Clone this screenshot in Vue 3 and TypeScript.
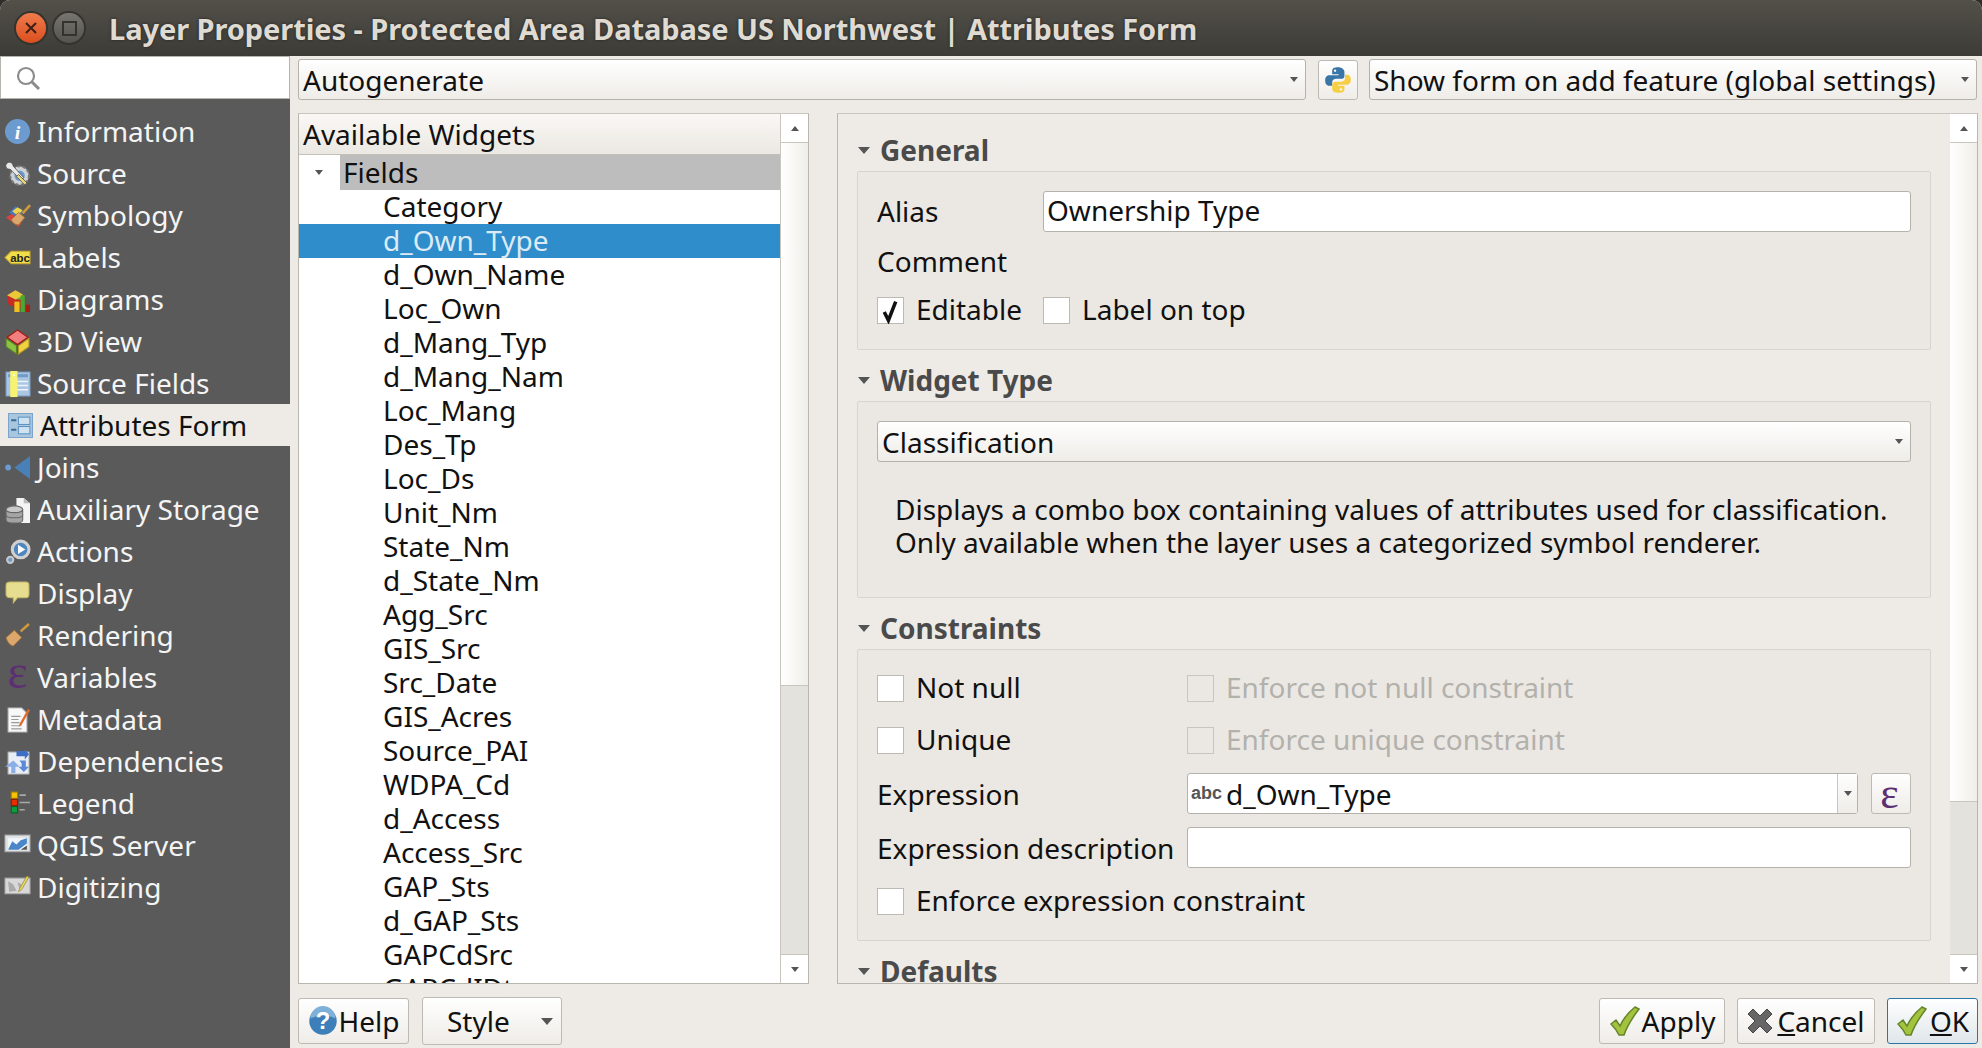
<template>
  <div class="window">
    <header class="titlebar">
      <span class="wm-btn close"><svg viewBox="0 0 16 16" width="16" height="16"><path d="M3 3l10 10M13 3L3 13" stroke="#3a2018" stroke-width="2" /></svg></span>
      <span class="wm-btn maxi"><i></i></span>
      <h1>Layer Properties - Protected Area Database US Northwest | Attributes Form</h1>
    </header>

    <div class="body">
      <aside class="sidebar">
        <div class="search">
          <svg viewBox="0 0 26 26" width="26" height="26"><circle cx="11" cy="11" r="8" fill="none" stroke="#8c8c8c" stroke-width="2.2" /><path d="M17 17l7 7" stroke="#8c8c8c" stroke-width="3" /></svg>
        </div>
        <nav class="nav">
          <div v-for="item in navItems" :key="item.label" class="nav-item" :class="{ active: item.label === 'Attributes Form' }">
            <svg class="nav-icon" viewBox="0 0 24 24" width="25" height="25" v-html="item.icon"></svg>
            <span>{{ item.label }}</span>
          </div>
        </nav>
      </aside>

      <main class="main">
        <div class="toprow">
          <div class="combo"><span>Autogenerate</span><b class="caret small"></b></div>
          <button class="pybtn">
            <svg viewBox="0 0 24 24" width="28" height="28">
              <path d="M12 1C7 1 7 3 7 5v2h5.500v1H4.500C2 8 1 10 1 12.500S2 17 4.500 17H7v-3c0-2 1.500-3 3.500-3h4.500c1.500 0 2.500-1 2.500-2.500V5c0-2-2-4-5.500-4z" fill="#3a75a8" />
              <path d="M12.500 23c5 0 5-2 5-4v-2H12v-1h7.500c2.500 0 3.500-2 3.500-4.500S22 7.500 19.500 7.500H18v3c0 2-1.500 3-3.500 3H10c-1.500 0-3 1-3 2.500v3.500c0 2 2 3.500 5.500 3.500z" fill="#f7cf45" />
              <circle cx="9.500" cy="4" r="1" fill="#fff" /><circle cx="14.500" cy="20" r="1" fill="#fff" />
            </svg>
          </button>
          <div class="combo"><span>Show form on add feature (global settings)</span><b class="caret small"></b></div>
        </div>

        <div class="panes">
          <section class="tree">
            <div class="tree-main">
              <div class="tree-head">Available Widgets</div>
              <div class="tree-root">
                <span class="tree-toggle"><b class="caret small"></b></span>
                <span class="tree-fields">Fields</span>
              </div>
              <div v-for="name in fields" :key="name" class="tree-row" :class="{ selected: name === 'd_Own_Type' }">
                <span>{{ name }}</span>
              </div>
            </div>
            <div class="scrollbar">
              <div class="sb-btn up"><b class="caret up small"></b></div>
              <div class="sb-thumb tree-thumb"></div>
              <div class="sb-track"></div>
              <div class="sb-btn"><b class="caret small"></b></div>
            </div>
          </section>

          <section class="form-pane">
            <div class="form-main">
              <div class="group">
                <div class="group-title"><b class="caret"></b>General</div>
                <div class="group-box general">
                  <div class="alias-row">
                    <label>Alias</label>
                    <div class="input">Ownership Type</div>
                  </div>
                  <div class="comment-row">Comment</div>
                  <div class="checks-row">
                    <div class="check-col">
                      <span class="checkbox">
                        <svg viewBox="0 0 24 24" width="26" height="26"><path d="M6 13l4 8 7-18" fill="none" stroke="#111" stroke-width="3.400" /></svg>
                      </span>
                      Editable
                    </div>
                    <div class="check-col"><span class="checkbox"></span>Label on top</div>
                  </div>
                </div>
              </div>

              <div class="group">
                <div class="group-title"><b class="caret"></b>Widget Type</div>
                <div class="group-box widget">
                  <div class="combo"><span>Classification</span><b class="caret small"></b></div>
                  <p class="desc">Displays a combo box containing values of attributes used for classification.<br />Only available when the layer uses a categorized symbol renderer.</p>
                </div>
              </div>

              <div class="group">
                <div class="group-title"><b class="caret"></b>Constraints</div>
                <div class="group-box constraints">
                  <div class="cons-row first">
                    <div class="check-col"><span class="checkbox"></span>Not null</div>
                    <div class="check-col disabled"><span class="checkbox"></span>Enforce not null constraint</div>
                  </div>
                  <div class="cons-row second">
                    <div class="check-col"><span class="checkbox"></span>Unique</div>
                    <div class="check-col disabled"><span class="checkbox"></span>Enforce unique constraint</div>
                  </div>
                  <div class="cons-row expr">
                    <label>Expression</label>
                    <div class="expr-wrap">
                      <div class="expr-input">
                        <span class="abc">abc</span><span class="expr-text">d_Own_Type</span>
                        <span class="expr-drop"><b class="caret small"></b></span>
                      </div>
                      <button class="eps-btn">ε</button>
                    </div>
                  </div>
                  <div class="cons-row exprdesc">
                    <label>Expression description</label>
                    <div class="input"></div>
                  </div>
                  <div class="cons-row enforce">
                    <div class="check-col"><span class="checkbox"></span>Enforce expression constraint</div>
                  </div>
                </div>
              </div>

              <div class="group">
                <div class="group-title"><b class="caret"></b>Defaults</div>
              </div>
            </div>
            <div class="scrollbar">
              <div class="sb-btn up"><b class="caret up small"></b></div>
              <div class="sb-thumb form-thumb"></div>
              <div class="sb-track"></div>
              <div class="sb-btn"><b class="caret small"></b></div>
            </div>
          </section>
        </div>

        <footer class="buttons">
          <button class="btn help">
            <svg viewBox="0 0 24 24" width="30" height="30">
              <circle cx="12" cy="12" r="11" fill="#3d7fb8" />
              <path d="M2 10a10 10 0 0 1 20 0c-5-3-14-3-20 0z" fill="#7fb0d8" />
              <text x="12" y="18" text-anchor="middle" class="help-mark">?</text>
            </svg>
            Help
          </button>
          <button class="btn style"><span>Style</span><b class="caret"></b></button>
          <span class="spacer"></span>
          <button class="btn apply">
            <svg viewBox="0 0 32 32" width="32" height="32"><path :d="tickPath" fill="#a3c23e" stroke="#64852a" stroke-width="1.500" /></svg>
            Apply
          </button>
          <button class="btn cancel">
            <svg viewBox="0 0 26 26" width="26" height="26"><path d="M6 1l7 7 7-7 5 5-7 7 7 7-5 5-7-7-7 7-5-5 7-7-7-7z" fill="#666" stroke="#444" stroke-width="1" /></svg>
            <span><u>C</u>ancel</span>
          </button>
          <button class="btn ok">
            <svg viewBox="0 0 32 32" width="32" height="32"><path :d="tickPath" fill="#a3c23e" stroke="#64852a" stroke-width="1.500" /></svg>
            <span><u>O</u>K</span>
          </button>
        </footer>
      </main>
    </div>
  </div>
</template>

<script setup lang="ts">
const tickPath = 'M2 19l5-4 4 6C15 12 21 6 26 2l4 2c-6 8-12 17-15 26h-5C8 26 5 22 2 19z'

const navItems: { label: string; icon: string }[] = [
  { label: 'Information', icon: '<circle cx="12" cy="12" r="12" fill="#6c9bd0"/><text x="12" y="19" text-anchor="middle" font-family="Liberation Serif" font-weight="700" font-style="italic" font-size="19" fill="#fff">i</text>' },
  { label: 'Source', icon: '<circle cx="14" cy="14" r="9" fill="#cfd3d6" stroke="#777" stroke-dasharray="3 2" stroke-width="2"/><circle cx="14" cy="14" r="5" fill="#6c9bd0"/><path d="M1 3c3-3 6-2 7 2l10 11-3 2L5 8C2 8 0 6 1 3z" fill="#e8e8e8" stroke="#444" stroke-width=".7"/><path d="M13 13l8 8-2 2-8-8z" fill="#e8d77a" stroke="#444" stroke-width=".7"/>' },
  { label: 'Symbology', icon: '<path d="M1 14l6-4 9 9-3 4z" fill="#d8453f"/><path d="M4 9l6-6 8 6-6 5z" fill="#4877c4"/><path d="M7 8l5-4 5 3-5 5z" fill="#ecd44a"/><path d="M6 16l7-7 6 5-6 7c-3 0-6-2-7-5z" fill="#dba76a" stroke="#a0703a" stroke-width=".8"/><path d="M17 10l7-8" stroke="#d49a3a" stroke-width="2.400"/>' },
  { label: 'Labels', icon: '<path d="M0 12l6-6h18v12H6z" fill="#f1dc4a" stroke="#c9a92a"/><text x="14.500" y="16" text-anchor="middle" font-family="Liberation Sans" font-weight="700" font-size="11" fill="#222">abc</text>' },
  { label: 'Diagrams', icon: '<path d="M2 12a8 8 0 0 1 16 0h-2V20H8v-2H4z" fill="#c62b25"/><path d="M10 4a8 8 0 0 1 8 8h-8z" fill="#6dad2f"/><path d="M2 8l8 4 8-4-8-5z" fill="#e9c93a"/><rect x="9" y="14" width="5" height="10" fill="#f0c11c"/><rect x="15" y="8" width="4" height="16" fill="#4aa82e"/><rect x="20" y="17" width="4" height="7" fill="#a51d14"/>' },
  { label: '3D View', icon: '<path d="M12 1l10 7-10 7L2 8z" fill="#f07f7f" stroke="#a51d14" stroke-width="1.200"/><path d="M1 9l10 7v8L1 17z" fill="#8ac440" stroke="#587f27"/><path d="M23 9l-10 7v8l10-7z" fill="#f0d240" stroke="#b09a26"/>' },
  { label: 'Source Fields', icon: '<rect x="1" y="1" width="23" height="23" fill="#aac6e2" stroke="#7ba0c6"/><rect x="3" y="3" width="19" height="3" fill="#6f9cc7"/><path d="M10 10h12M10 14h12M10 18h12" stroke="#eef4fa" stroke-width="1.500"/><rect x="5" y="0" width="7" height="25" fill="#f7f272" /><circle cx="8.500" cy="4" r="1" fill="#fff"/>' },
  { label: 'Attributes Form', icon: '<rect x=".5" y=".5" width="23" height="23" fill="#a9c6df" stroke="#7ba4c8"/><rect x="10" y="4" width="11" height="7" fill="#cfe2f2" stroke="#5e94c2"/><rect x="10" y="13" width="11" height="7" fill="#cfe2f2" stroke="#5e94c2"/><path d="M3 7h5M3 16h5" stroke="#3c6d97" stroke-width="2"/>' },
  { label: 'Joins', icon: '<path d="M24 1v22L9 12z" fill="#4a80b8"/><circle cx="3" cy="12" r="2.800" fill="#6c9bd0"/>' },
  { label: 'Auxiliary Storage', icon: '<path d="M11 1h7l6 5v19H11z" fill="#f4f4f4"/><path d="M18 1v5h6" fill="#bbb"/><ellipse cx="9" cy="12" rx="8" ry="3.500" fill="#c8c8c8" stroke="#666"/><path d="M1 12v10c0 4 16 4 16 0V12c0 4-16 4-16 0z" fill="#a4a4a4" stroke="#666"/><path d="M1 17c0 4 16 4 16 0" fill="none" stroke="#666"/>' },
  { label: 'Actions', icon: '<circle cx="15" cy="10" r="8" fill="#4f86bf" stroke="#d0d0d0" stroke-width="3"/><path d="M12.500 5.500v9l7-4.500z" fill="#fff"/><circle cx="5" cy="20" r="3" fill="#6c9bd0" stroke="#c8c8c8" stroke-width="2"/>' },
  { label: 'Display', icon: '<path d="M5 1h15c2 0 3 1 3 3v9c0 2-1 3-3 3H12l-4 5v-5H5c-2 0-4-1-4-3V4c0-2 2-3 4-3z" fill="#e6dd91" stroke="#c3b864"/>' },
  { label: 'Rendering', icon: '<path d="M15 8l8-7" stroke="#d49a3a" stroke-width="2.400"/><path d="M1 14l8-7 7 7-8 8c-3 0-6-4-7-8z" fill="#dba76a" stroke="#a0703a" stroke-width=".8"/>' },
  { label: 'Variables', icon: '<text x="12" y="22" text-anchor="middle" font-family="Liberation Serif" font-size="46" fill="#5c2f72">ε</text>' },
  { label: 'Metadata', icon: '<path d="M3 1h13l5 5v18H3z" fill="#f8f8f8" stroke="#bbb"/><path d="M6 9h9M6 12h7M6 15h8M6 18h10M6 21h10" stroke="#999"/><path d="M14 16l8-14 2 1-8 14-3 2z" fill="#e26a2c"/>' },
  { label: 'Dependencies', icon: '<rect x="3" y="3" width="20" height="21" fill="#e9eef6" stroke="#bbb"/><path d="M11 2h8V0l4 5-4 5V7h-8z" fill="#3d6fc4"/><path d="M8 11l6 6H10v6H6v-6H0z" fill="#8aaee6"/><path d="M14 11h6v6l3 0-5 5-5-5h3v-3z" fill="#5b8ad6"/>' },
  { label: 'Legend', icon: '<rect x="6" y="1" width="6" height="6" fill="#f7c400" stroke="#a58300"/><rect x="6" y="8" width="6" height="6" fill="#e62e00" stroke="#8c1c00"/><rect x="6" y="15" width="6" height="6" fill="#0f9c3d" stroke="#0a5f25"/><path d="M14 4h6M14 11h10M14 18h5" stroke="#a9a9a9" stroke-width="1.600"/>' },
  { label: 'QGIS Server', icon: '<rect x="0" y="2" width="24" height="16" fill="#dfe3e6" stroke="#aaa"/><rect x="3" y="5" width="18" height="11" fill="#f2f6fa"/><path d="M3 16l4-8 4 3 4-4 6-2v5l-8 6z" fill="#4a86c8"/><path d="M15 16l6-4v4z" fill="#555"/>' },
  { label: 'Digitizing', icon: '<rect x="0" y="3" width="24" height="15" fill="#d8d8d8" stroke="#aaa"/><path d="M3 6l5 3 3 6-7 1zM12 7l4 2-2 5z" fill="#aaa"/><path d="M14 13l7-12 2 1-7 12-3 2z" fill="#e8d85a" stroke="#8a7d28" stroke-width=".6"/>' },
]

const fields = [
  'Category', 'd_Own_Type', 'd_Own_Name', 'Loc_Own', 'd_Mang_Typ', 'd_Mang_Nam',
  'Loc_Mang', 'Des_Tp', 'Loc_Ds', 'Unit_Nm', 'State_Nm', 'd_State_Nm', 'Agg_Src',
  'GIS_Src', 'Src_Date', 'GIS_Acres', 'Source_PAI', 'WDPA_Cd', 'd_Access',
  'Access_Src', 'GAP_Sts', 'd_GAP_Sts', 'GAPCdSrc', 'GAPCdIDt',
]
</script>

<style>
html, body { margin: 0; background: #2f2e2a; }
</style>

<style scoped>
.window {
  width: 1982px;
  height: 1048px;
  display: flex;
  flex-direction: column;
  overflow: hidden;
  background: #eeebe6;
  border-radius: 10px 10px 0 0;
  font-family: "Noto Sans", sans-serif;
  font-size: 28px;
  color: #111;
}

.titlebar {
  height: 56px;
  flex: none;
  display: flex;
  align-items: center;
  padding-left: 16px;
  background: linear-gradient(#53504a, #3c3b35);
}
.titlebar h1 {
  margin: 0 0 0 17px;
  font-size: 29px;
  font-weight: 700;
  letter-spacing: -0.07px;
  color: #dfdbd2;
  text-shadow: 0 0 3px #222;
  white-space: nowrap;
}
.wm-btn {
  width: 30px;
  height: 30px;
  border-radius: 50%;
  display: flex;
  align-items: center;
  justify-content: center;
  box-shadow: 0 0 0 2px #35332e;
  margin-right: 8px;
}
.wm-btn.close { background: linear-gradient(#f07a4c, #dc4f1e); }
.wm-btn.maxi { background: linear-gradient(#77756f, #55534e); }
.wm-btn.maxi i { width: 11px; height: 11px; border: 2px solid #33322e; }

.body { flex: 1; display: flex; min-height: 0; }

.sidebar { width: 290px; flex: none; background: #5a5a5a; display: flex; flex-direction: column; }
.search {
  height: 41px;
  background: #fff;
  border: 1px solid #b5b3ae;
  display: flex;
  align-items: center;
  padding-left: 14px;
}
.nav { padding-top: 11px; }
.nav-item {
  height: 42px;
  line-height: 40px;
  display: flex;
  align-items: center;
  gap: 7px;
  padding-left: 5px;
  color: #f4f4f4;
  white-space: nowrap;
}
.nav-item.active { background: #eeebe6; color: #111; padding-left: 8px; }
.nav-icon { flex: none; overflow: visible; }

.main { flex: 1; min-width: 0; padding: 3px 4px 0 8px; display: flex; flex-direction: column; }

.toprow { display: grid; grid-template-columns: 1008px 39px 608px; column-gap: 12px; height: 42px; }
.toprow .pybtn { margin-top: 1px; height: 40px; width: 40px; }
.combo {
  height: 41px;
  display: flex;
  align-items: center;
  justify-content: space-between;
  padding: 0 7px 0 4px;
  border: 1px solid #b5b2ac;
  border-radius: 3px;
  background: linear-gradient(#fff, #efece8);
  box-sizing: border-box;
  white-space: nowrap;
}
.pybtn {
  display: flex;
  align-items: center;
  justify-content: center;
  padding: 0;
  border: 1px solid #bdbab4;
  border-radius: 3px;
  background: linear-gradient(#fff, #efece8);
}

.caret {
  display: inline-block;
  width: 0;
  height: 0;
  border-left: 6px solid transparent;
  border-right: 6px solid transparent;
  border-top: 7px solid #555;
}
.caret.small { border-left-width: 4px; border-right-width: 4px; border-top-width: 5px; }
.caret.up { border-top: 0; border-bottom: 5px solid #555; }

.panes {
  margin-top: 12px;
  height: 871px;
  flex: none;
  display: grid;
  grid-template-columns: 511px 1141px;
  column-gap: 28px;
}

.tree, .form-pane {
  display: grid;
  grid-template-columns: 1fr 27px;
  border: 1px solid #b9b6b0;
  border-top-color: #c9c6c0;
  min-height: 0;
  overflow: hidden;
}
.tree-main { background: #fff; overflow: hidden; border-right: 1px solid #c9c6c0; }
.tree-head {
  height: 41px;
  line-height: 41px;
  padding-left: 4px;
  box-sizing: border-box;
  background: linear-gradient(#faf8f5, #ebe8e3);
  border-bottom: 1px solid #c4c1bb;
}
.tree-root { height: 35px; display: flex; }
.tree-toggle { width: 39px; display: flex; align-items: center; justify-content: center; padding-right: 2px; }
.tree-fields { flex: 1; background: #bdbdbd; padding-left: 3px; line-height: 34px; }
.tree-row { height: 34px; line-height: 33px; padding-left: 84px; white-space: nowrap; }
.tree-row.selected { background: #308dcb; color: #dbeaf4; }

.scrollbar { display: flex; flex-direction: column; background: #e4e2dd; }
.sb-btn {
  height: 28px;
  flex: none;
  display: flex;
  align-items: center;
  justify-content: center;
  background: #fff;
}
.sb-btn.up { border-bottom: 1px solid #c9c6c0; }
.sb-thumb { flex: none; background: linear-gradient(90deg, #fff, #f0eee9); border-bottom: 1px solid #c9c6c0; }
.tree-thumb { height: 542px; }
.form-thumb { height: 658px; }
.sb-track { flex: 1; border-bottom: 1px solid #c9c6c0; }

.form-main { padding: 19px 19px 0 19px; overflow: hidden; }
.group { margin-bottom: 13px; }
.group-title {
  height: 34px;
  line-height: 34px;
  margin-bottom: 4px;
  display: flex;
  align-items: center;
  gap: 10px;
  padding-left: 1px;
  font-weight: 700;
  color: #4a4a4a;
}
.group-box {
  background: #ebe8e3;
  border: 1px solid #d8d5d0;
  border-radius: 2px;
  padding: 19px 19px 0 19px;
}
.group-box.general { height: 179px; box-sizing: border-box; }
.group-box.widget { height: 197px; box-sizing: border-box; }
.group-box.constraints { height: 292px; box-sizing: border-box; padding-top: 25px; }

.input {
  height: 41px;
  box-sizing: border-box;
  line-height: 37px;
  padding-left: 3px;
  background: #fff;
  border: 1px solid #b5b2ac;
  border-radius: 3px;
}
.alias-row { display: grid; grid-template-columns: 166px 1fr; align-items: center; }
.alias-row label { line-height: 38px; padding-bottom: 2px; }
.comment-row { margin-top: 14px; height: 33px; line-height: 31px; }
.checks-row { margin-top: 18px; display: grid; grid-template-columns: 166px 1fr; }
.check-col { display: flex; align-items: flex-start; gap: 12px; height: 27px; line-height: 25px; white-space: nowrap; }
.checkbox {
  width: 27px;
  height: 27px;
  flex: none;
  box-sizing: border-box;
  display: flex;
  align-items: center;
  justify-content: center;
  background: #fff;
  border: 1px solid #bdbab4;
}
.check-col.disabled { color: #b3b1ac; }
.check-col.disabled .checkbox { background: #ebe8e3; border-color: #c9c6c0; }

.desc { margin: 31px 0 0 18px; line-height: 33px; white-space: nowrap; }

.cons-row { display: grid; grid-template-columns: 310px 1fr; align-items: center; }
.cons-row.second { margin-top: 25px; }
.cons-row.expr { margin-top: 19px; }
.cons-row.exprdesc { margin-top: 13px; }
.cons-row.enforce { margin-top: 20px; }
.expr-wrap { display: flex; gap: 13px; }
.expr-input {
  flex: 1;
  height: 41px;
  box-sizing: border-box;
  display: flex;
  align-items: center;
  background: #fff;
  border: 1px solid #b5b2ac;
  border-radius: 3px;
}
.abc { font-family: "Liberation Sans", sans-serif; font-weight: 700; font-size: 18px; color: #555; margin: 0 4px 0 3px; }
.expr-text { flex: 1; }
.expr-drop {
  width: 19px;
  align-self: stretch;
  display: flex;
  align-items: center;
  justify-content: center;
  border-left: 1px solid #c9c6c0;
  background: linear-gradient(#fff, #efece8);
}
.eps-btn {
  width: 40px;
  height: 41px;
  padding: 0 3px 0 0;
  background: linear-gradient(#fff, #efece8);
  border: 1px solid #bdbab4;
  border-radius: 3px;
  font-family: "Liberation Serif", serif;
  font-size: 44px;
  line-height: 30px;
  color: #5c2f72;
}

.buttons { flex: 1; display: flex; align-items: center; gap: 12px; padding-top: 10px; }
.spacer { flex: 1; }
.btn {
  height: 46px;
  display: flex;
  align-items: center;
  justify-content: center;
  padding: 0;
  border: 1px solid #bdbab4;
  border-radius: 3px;
  background: linear-gradient(#fff, #efece8);
  font: inherit;
  color: #111;
}
.btn.help { width: 111px; gap: 1px; }
.btn.style { width: 140px; height: 48px; margin-left: 1px; gap: 31px; padding-left: 24px; justify-content: flex-start; }
.btn.apply { width: 126px; gap: 1px; }
.btn.cancel { width: 138px; gap: 4px; }
.btn.ok { width: 91px; gap: 2px; border-color: #2a76a8; background: linear-gradient(#fff, #dfe6ea); }
.help-mark { font-family: "Liberation Sans", sans-serif; font-size: 19px; font-weight: 700; fill: #fff; }
</style>
